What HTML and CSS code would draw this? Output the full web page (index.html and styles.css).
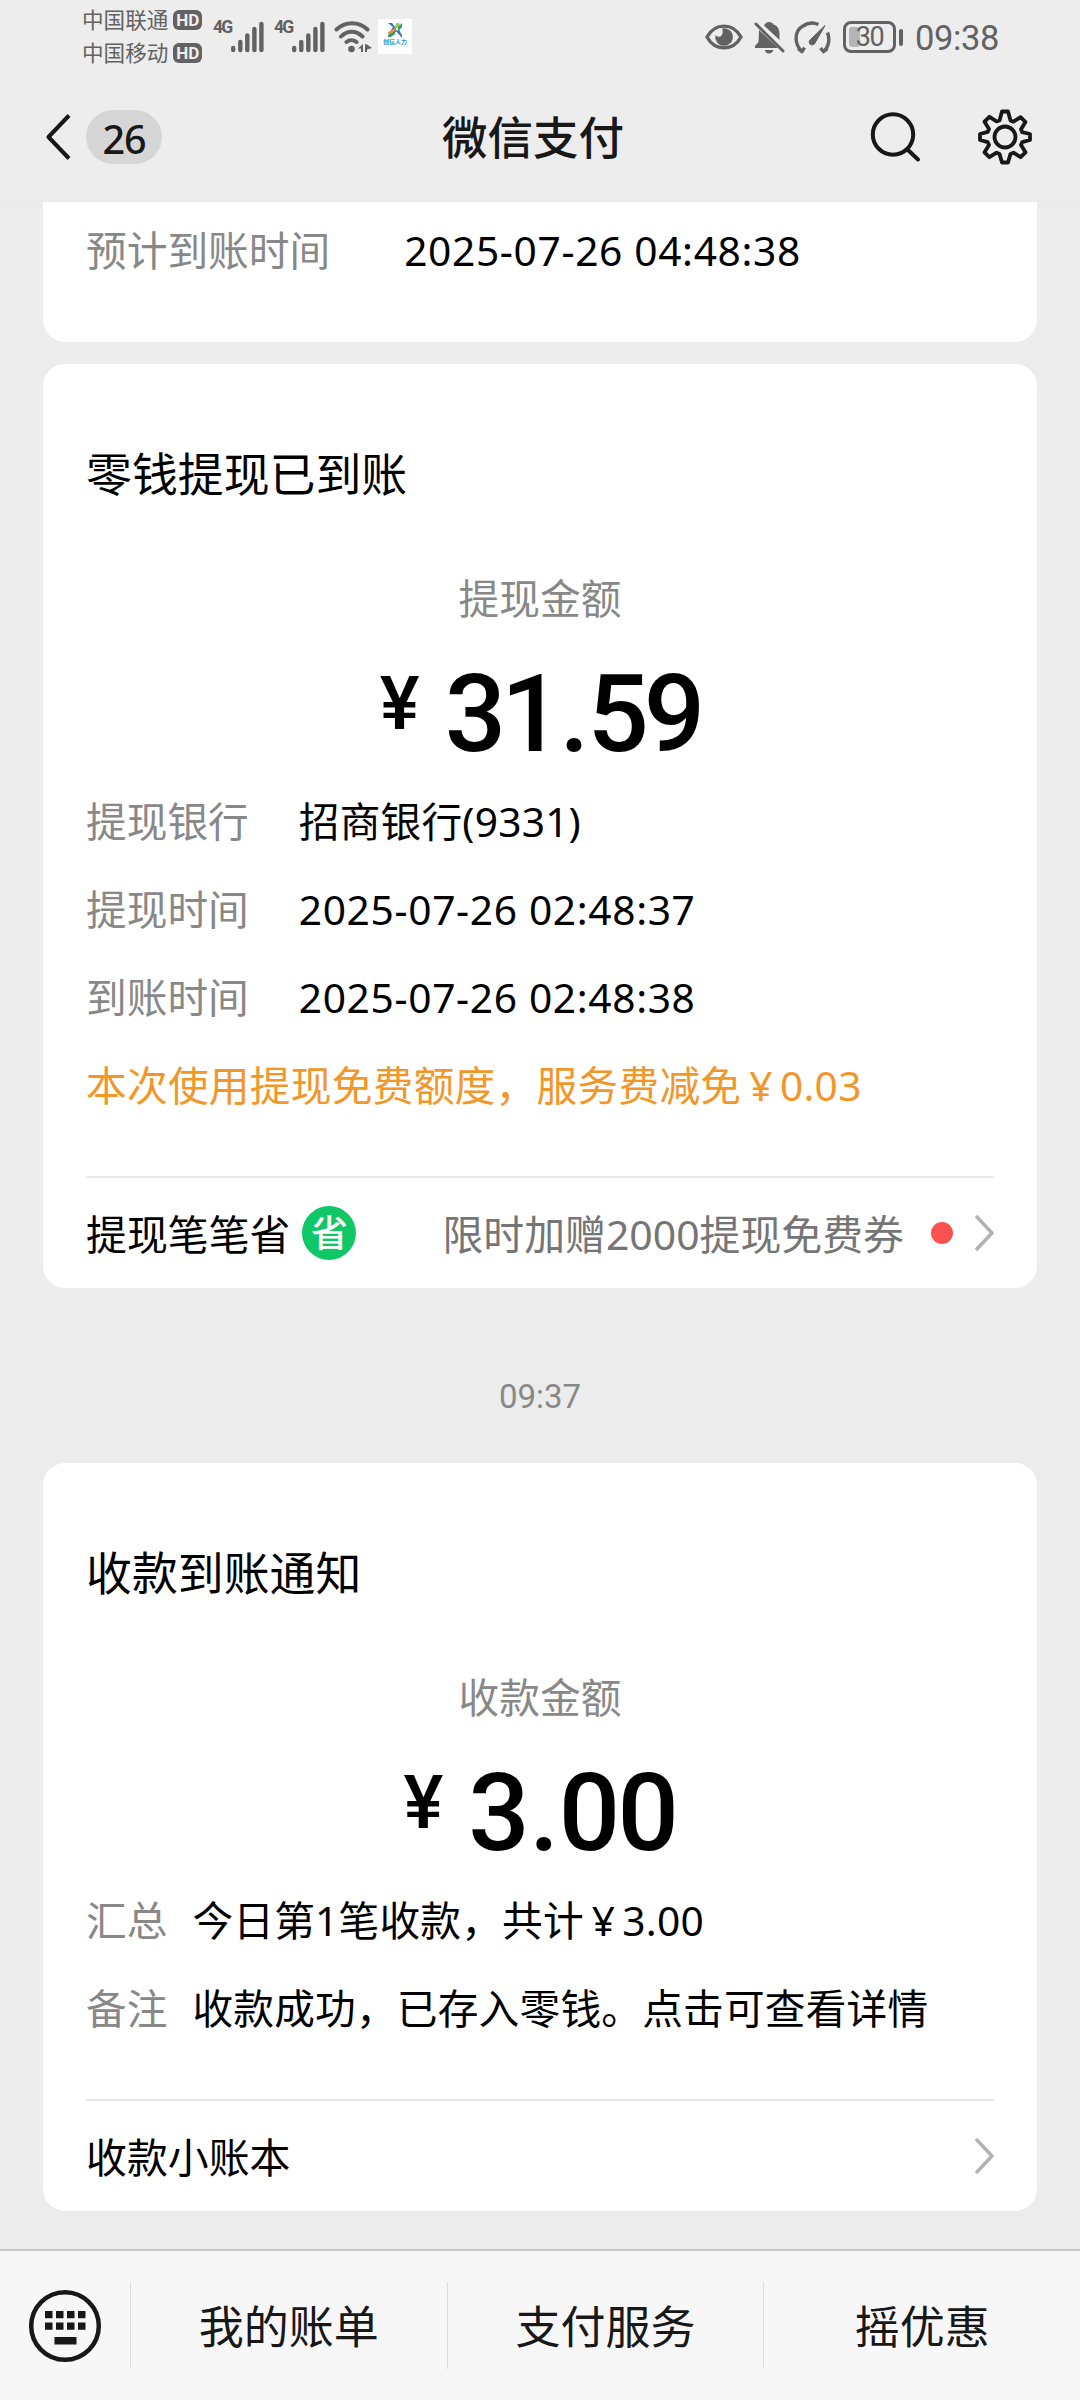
FILE: index.html
```html
<!DOCTYPE html>
<html lang="zh-CN">
<head>
<meta charset="utf-8">
<title>微信支付</title>
<link rel="stylesheet" href="styles.css">
</head>
<body>
<div class="screen">
  <header class="top">
    <div class="status">
      <div class="carriers">
        <div class="carrier"><span>中国联通</span><b class="hd">HD</b></div>
        <div class="carrier"><span>中国移动</span><b class="hd">HD</b></div>
      </div>
      <div class="signal"><span class="net">4G</span>
        <svg width="33" height="32" viewBox="0 0 33 32" stroke="#626262" stroke-width="4.4" stroke-linecap="round"><path d="M2.2 27v2M9.3 21v8M16.3 14.5v14.5M23.4 8v21M30.4 3v26"/></svg>
      </div>
      <div class="signal second"><span class="net">4G</span>
        <svg width="33" height="32" viewBox="0 0 33 32" stroke="#626262" stroke-width="4.4" stroke-linecap="round"><path d="M2.2 27v2M9.3 21v8M16.3 14.5v14.5M23.4 8v21M30.4 3v26"/></svg>
      </div>
      <svg class="wifi" width="38" height="32" viewBox="0 0 38 32" fill="none" stroke="#626262" stroke-width="4" stroke-linecap="round"><path d="M2.500 8.500C11 0 25 0 33.500 8.500M7 15.500C13 9 22 9 28.500 15.500M12.500 21C15.500 18.500 19.500 18.500 22.500 21"/><circle cx="17.500" cy="28" r="3.300" fill="#626262" stroke="none"/><path d="M24 27.500l5-4.500v8h-2v-3.500zM31 23v8l2 0v-2.500l5-1.500-5-3.500z" fill="#626262" stroke="none"/></svg>
      <div class="app">
        <svg width="14" height="15" viewBox="0 0 14 15"><path d="M0 0h4l3 4 2 4-3 2-3-3 2-3z" fill="#2a78b8"/><path d="M7 3l2-3h2l1 2-4 4z" fill="#9bc53d"/><path d="M10 4l4-4v4l-4 5z" fill="#2f9e56"/><path d="M0 9l7-4 1 2-5 4H0z" fill="#ef8a4c"/><path d="M0 12l7-4v3l-4 3H0z" fill="#2f9e56"/><path d="M8 8l3-1 3 5v3z" fill="#2a78b8"/></svg>
        <span>创信人力</span>
      </div>
      <div class="sys">
        <svg width="38" height="28" viewBox="0 0 38 28"><path d="M2 14C10-.5 28-.5 36 14 28 28.500 10 28.500 2 14z" fill="none" stroke="#626262" stroke-width="3.400"/><path d="M17 5.500A8.800 8.800 0 1 1 10.500 12c1.500 2 4.500 2.500 6 .5 1.600-2 1.500-4.500.5-7z" fill="#626262"/></svg>
        <svg class="bell" width="31" height="33" viewBox="0 0 31 33" fill="#626262"><path d="M10 4.500C11 2.500 13 1 15 1s4 1 4.600 2.500C24 5 25.500 9 25.500 13v6z"/><path d="M5 9l19 18H1v-2l3.500-4zM10.500 29h9c-1 2.500-2.500 3.500-4.500 3.500s-3.500-1-4.500-3.500z"/><path d="M2 3l27 27" stroke="#626262" stroke-width="3" stroke-linecap="round"/></svg>
        <svg class="gauge" width="37" height="33" viewBox="0 0 37 33" fill="none" stroke="#626262" stroke-width="3.400" stroke-linejoin="round"><path d="M4 27.500l4 3.200 2.500-4M8 30.700C0 23 0 10 9 5 14 1.500 20 1.500 24.500 3.500M33.500 11.500C36.500 19 34 27 29.500 30.700L26.500 27M29.500 30.700l4-3"/><path d="M31 4.500L21 22a3 3 0 1 1-4.500-3.500z" fill="#626262" stroke-width="1"/></svg>
        <div class="battery"><i class="level"></i><span>30</span></div><i class="nub"></i>
        <span class="clock">09:38</span>
      </div>
    </div>
    <nav class="nav">
      <svg class="back" width="26" height="46" viewBox="0 0 26 46" fill="none" stroke="#181818" stroke-width="4"><path d="M24 1.500L3.500 23 24 44.500" stroke-linejoin="round"/></svg>
      <span class="unread">26</span>
      <h1>微信支付</h1>
      <svg class="search" width="52" height="52" viewBox="0 0 52 52" fill="none" stroke="#181818" stroke-width="4" stroke-linecap="round"><circle cx="23" cy="23.500" r="20.200"/><path d="M38 39l10 9.500"/></svg>
      <svg class="gear" width="56" height="56" viewBox="-28 -28 56 56" fill="none" stroke="#181818" stroke-width="3.800" stroke-linejoin="round"><path d="M-5.500-16.500L-3-25.500h6l2.500 9 2.900 1.200 7.200-4.500 4.900 4.900-4.500 7.200 1.200 2.900L25-3v6l-7.800 2.200-1.200 2.900 4.500 7.200-4.900 4.900-7.200-4.500-2.900 1.200L3 25.500h-6l-2.500-8.600-2.900-1.200-7.200 4.500-4.900-4.900 4.500-7.200-1.200-2.900L-25 3v-6l7.800-2.200 1.200-2.900-4.500-7.200 4.900-4.900 7.200 4.500z"/><circle r="10.500"/></svg>
    </nav>
  </header>

  <main class="feed">
    <section class="card previous">
      <dl class="rows"><div class="row"><dt>预计到账时间</dt><dd class="date">2025-07-26 04:48:38</dd></div></dl>
    </section>

    <section class="card withdraw">
      <h2>零钱提现已到账</h2>
      <p class="caption">提现金额</p>
      <p class="amount"><span class="yen">¥</span><span class="num narrow">31<span class="point">.</span>59</span></p>
      <dl class="rows">
        <div class="row"><dt>提现银行</dt><dd>招商银行(9331)</dd></div>
        <div class="row"><dt>提现时间</dt><dd class="date">2025-07-26 02:48:37</dd></div>
        <div class="row"><dt>到账时间</dt><dd class="date">2025-07-26 02:48:38</dd></div>
      </dl>
      <p class="notice">本次使用提现免费额度，服务费减免<span class="cny">¥</span>0.03</p>
      <div class="foot">
        <span>提现笔笔省</span><span class="save">省</span>
        <span class="promo">限时加赠2000提现免费券</span><i class="dot"></i>
        <svg class="chev" width="21" height="38" viewBox="0 0 21 38" fill="none" stroke="#b2b2b2" stroke-width="3.400"><path d="M3 2l16 17L3 36" stroke-linejoin="round"/></svg>
      </div>
    </section>

    <time class="stamp">09:37</time>

    <section class="card receive">
      <h2>收款到账通知</h2>
      <p class="caption">收款金额</p>
      <p class="amount"><span class="yen">¥</span><span class="num">3<span class="point">.</span>00</span></p>
      <dl class="rows">
        <div class="row"><dt>汇总</dt><dd>今日第1笔收款，共计<span class="cny">¥</span>3.00</dd></div>
        <div class="row"><dt>备注</dt><dd>收款成功，已存入零钱。点击可查看详情</dd></div>
      </dl>
      <div class="foot">
        <span>收款小账本</span>
        <svg class="chev" width="21" height="38" viewBox="0 0 21 38" fill="none" stroke="#b2b2b2" stroke-width="3.400"><path d="M3 2l16 17L3 36" stroke-linejoin="round"/></svg>
      </div>
    </section>
  </main>

  <footer class="menu">
    <div class="kbd"><svg width="74" height="74" viewBox="0 0 74 74" fill="#181818"><circle cx="37" cy="37" r="33.800" fill="none" stroke="#181818" stroke-width="4.500"/><path d="M17 22h7.500v7.200H17zM28 22h7.500v7.200H28zM39 22h7.500v7.200H39zM50 22h7.500v7.200H50zM17 33.500h7.500v7.200H17zM28 33.500h7.500v7.200H28zM39 33.500h7.500v7.200H39zM50 33.500h7.500v7.200H50zM26.500 48h22v7.500h-22z"/></svg></div>
    <a class="item">我的账单</a><a class="item">支付服务</a><a class="item">摇优惠</a>
  </footer>
</div>
</body>
</html>
```
FILE: styles.css
```css
* { box-sizing: border-box; }
body, h1, h2, p, dl, dd { margin: 0; }
body {
  background: #ececec;
  color: #000;
  font-family: "Noto Sans", "Noto Sans CJK SC", sans-serif;
}
svg { display: block; flex: none; }
.screen {
  width: 1080px;
  height: 2400px;
  overflow: hidden;
  display: flex;
  flex-direction: column;
}

/* status bar and navigation */
.top { height: 202px; flex: none; background: #ededed; border-bottom: 1px solid #e8e8e8; }
.status {
  height: 72px;
  padding-left: 82px;
  display: flex;
  color: #626262;
}
.carriers { width: 122px; margin-top: 4px; }
.carrier { height: 32.5px; display: flex; align-items: center; font-size: 21.6px; line-height: 32px; white-space: nowrap; }
.hd {
  width: 29px;
  height: 20px;
  margin-left: 5px;
  border-radius: 6px;
  background: #626262;
  color: #ededed;
  font: bold 17px/20px "Roboto", sans-serif;
  text-align: center;
}
.signal { display: flex; margin: 21px 0 0 9px; height: 32px; width: 52px; }
.signal.second { margin-left: 9px; }
.net { width: 18px; font: bold 17.500px/13px "Roboto", sans-serif; letter-spacing: -1.8px; white-space: nowrap; }
.wifi { margin: 21px 0 0 8px; }
.app {
  width: 34px;
  height: 35px;
  margin: 19px 0 0 6px;
  padding-top: 4px;
  background: #fff;
  display: flex;
  flex-direction: column;
  align-items: center;
}
.app span { font-size: 6px; line-height: 9px; font-weight: bold; color: #2a93c8; white-space: nowrap; }
.sys { margin-left: auto; padding: 20px 80px 0 0; display: flex; height: 54px; align-items: center; }
.bell { margin-left: 11px; }
.gauge { margin-left: 9px; }
.battery {
  position: relative;
  width: 53px;
  height: 32px;
  margin-left: 12px;
  border: 3px solid #626262;
  border-radius: 8px;
  font: 27px/27px "Roboto", sans-serif;
  text-align: center;
}
.battery span { position: relative; letter-spacing: -1.5px; }
.level { position: absolute; left: 3px; top: 3px; width: 11px; height: 20px; border-radius: 3px; background: #b4b4b4; }
.nub { width: 4px; height: 17px; margin-left: 3px; border-radius: 2px; background: #626262; }
.clock { width: 85px; margin-left: 12px; padding-top: 2px; font: 34.500px/34px "Roboto", sans-serif; letter-spacing: -.4px; }

.nav { height: 130px; padding: 0 47px 0 45px; display: flex; align-items: center; color: #181818; }
.unread {
  width: 76px;
  height: 54px;
  margin-left: 15px;
  border-radius: 27px;
  background: #d6d6d6;
  font-size: 39.500px;
  letter-spacing: -1px;
  line-height: 58px;
  text-align: center;
  font-weight: 500;
}
.nav h1 { margin: -5px 0 0 280px; font: 500 45.500px/60px "Noto Sans CJK SC", sans-serif; }
.search { margin-left: 246px; }
.gear { margin-left: auto; }

/* message cards */
.feed { flex: 1; padding: 0 43px; display: flex; flex-direction: column; }
.card { flex: none; padding: 0 43px; border-radius: 22px; background: #fff; }
.previous { height: 140px; padding-top: 4px; border-radius: 0 0 22px 22px; }
.previous dt { margin-right: 74px; }
.withdraw { height: 924px; margin-top: 22px; }
.withdraw dt { margin-right: 50px; }
.receive { height: 748px; }
.receive dt { margin-right: 25px; }
.card h2 { padding-top: 77px; font: 400 45.900px/60px "Noto Sans CJK SC", sans-serif; }
.caption { margin-top: 67px; font-size: 40.700px; line-height: 60px; text-align: center; color: #888; }
.amount { height: 149px; padding-top: 32px; display: flex; justify-content: center; font-family: "Roboto", sans-serif; font-weight: 500; }
.yen { font-size: 75px; line-height: 86px; margin-right: 25px; }
.num { font-size: 108px; line-height: 108px; letter-spacing: -2.5px; }
.narrow { letter-spacing: -5px; }
.point { margin: 0 2px; }
.narrow .point { margin-right: 3px; }
.row, .notice { height: 88px; line-height: 88px; font-size: 40.700px; white-space: nowrap; }
.row { display: flex; }
dt { color: #888; }
dd { letter-spacing: .2px; }
.date { letter-spacing: .65px; }
.cny { padding: 0 7px 0 8px; }
.notice { color: #f39629; letter-spacing: .27px; }
.foot { margin-top: 47px; height: 111px; border-top: 2px solid #e8e8e8; display: flex; align-items: center; font-size: 40.900px; }
.save {
  width: 54px;
  height: 54px;
  margin-left: 12px;
  border-radius: 50%;
  background: #0fc766;
  color: #fff;
  font: 500 37px/51px "Noto Sans CJK SC", sans-serif;
  text-align: center;
}
.promo { margin-left: auto; color: #757575; }
.dot { width: 22px; height: 22px; margin-left: 27px; border-radius: 50%; background: #fa5151; }
.chev { margin-left: 20px; }
.receive .chev { margin-left: auto; }
.stamp { height: 175px; line-height: 217px; font-size: 33px; font-family: "Roboto", sans-serif; text-align: center; color: #888; }

/* bottom menu */
.menu { flex: none; height: 151px; border-top: 2px solid #c8c8c8; background: #f7f7f7; display: flex; align-items: center; }
.kbd { width: 130px; padding-left: 28px; }
.item { flex: 1; height: 87px; border-left: 1px solid #dedede; font-size: 45px; line-height: 90px; text-align: center; color: #181818; }
```
